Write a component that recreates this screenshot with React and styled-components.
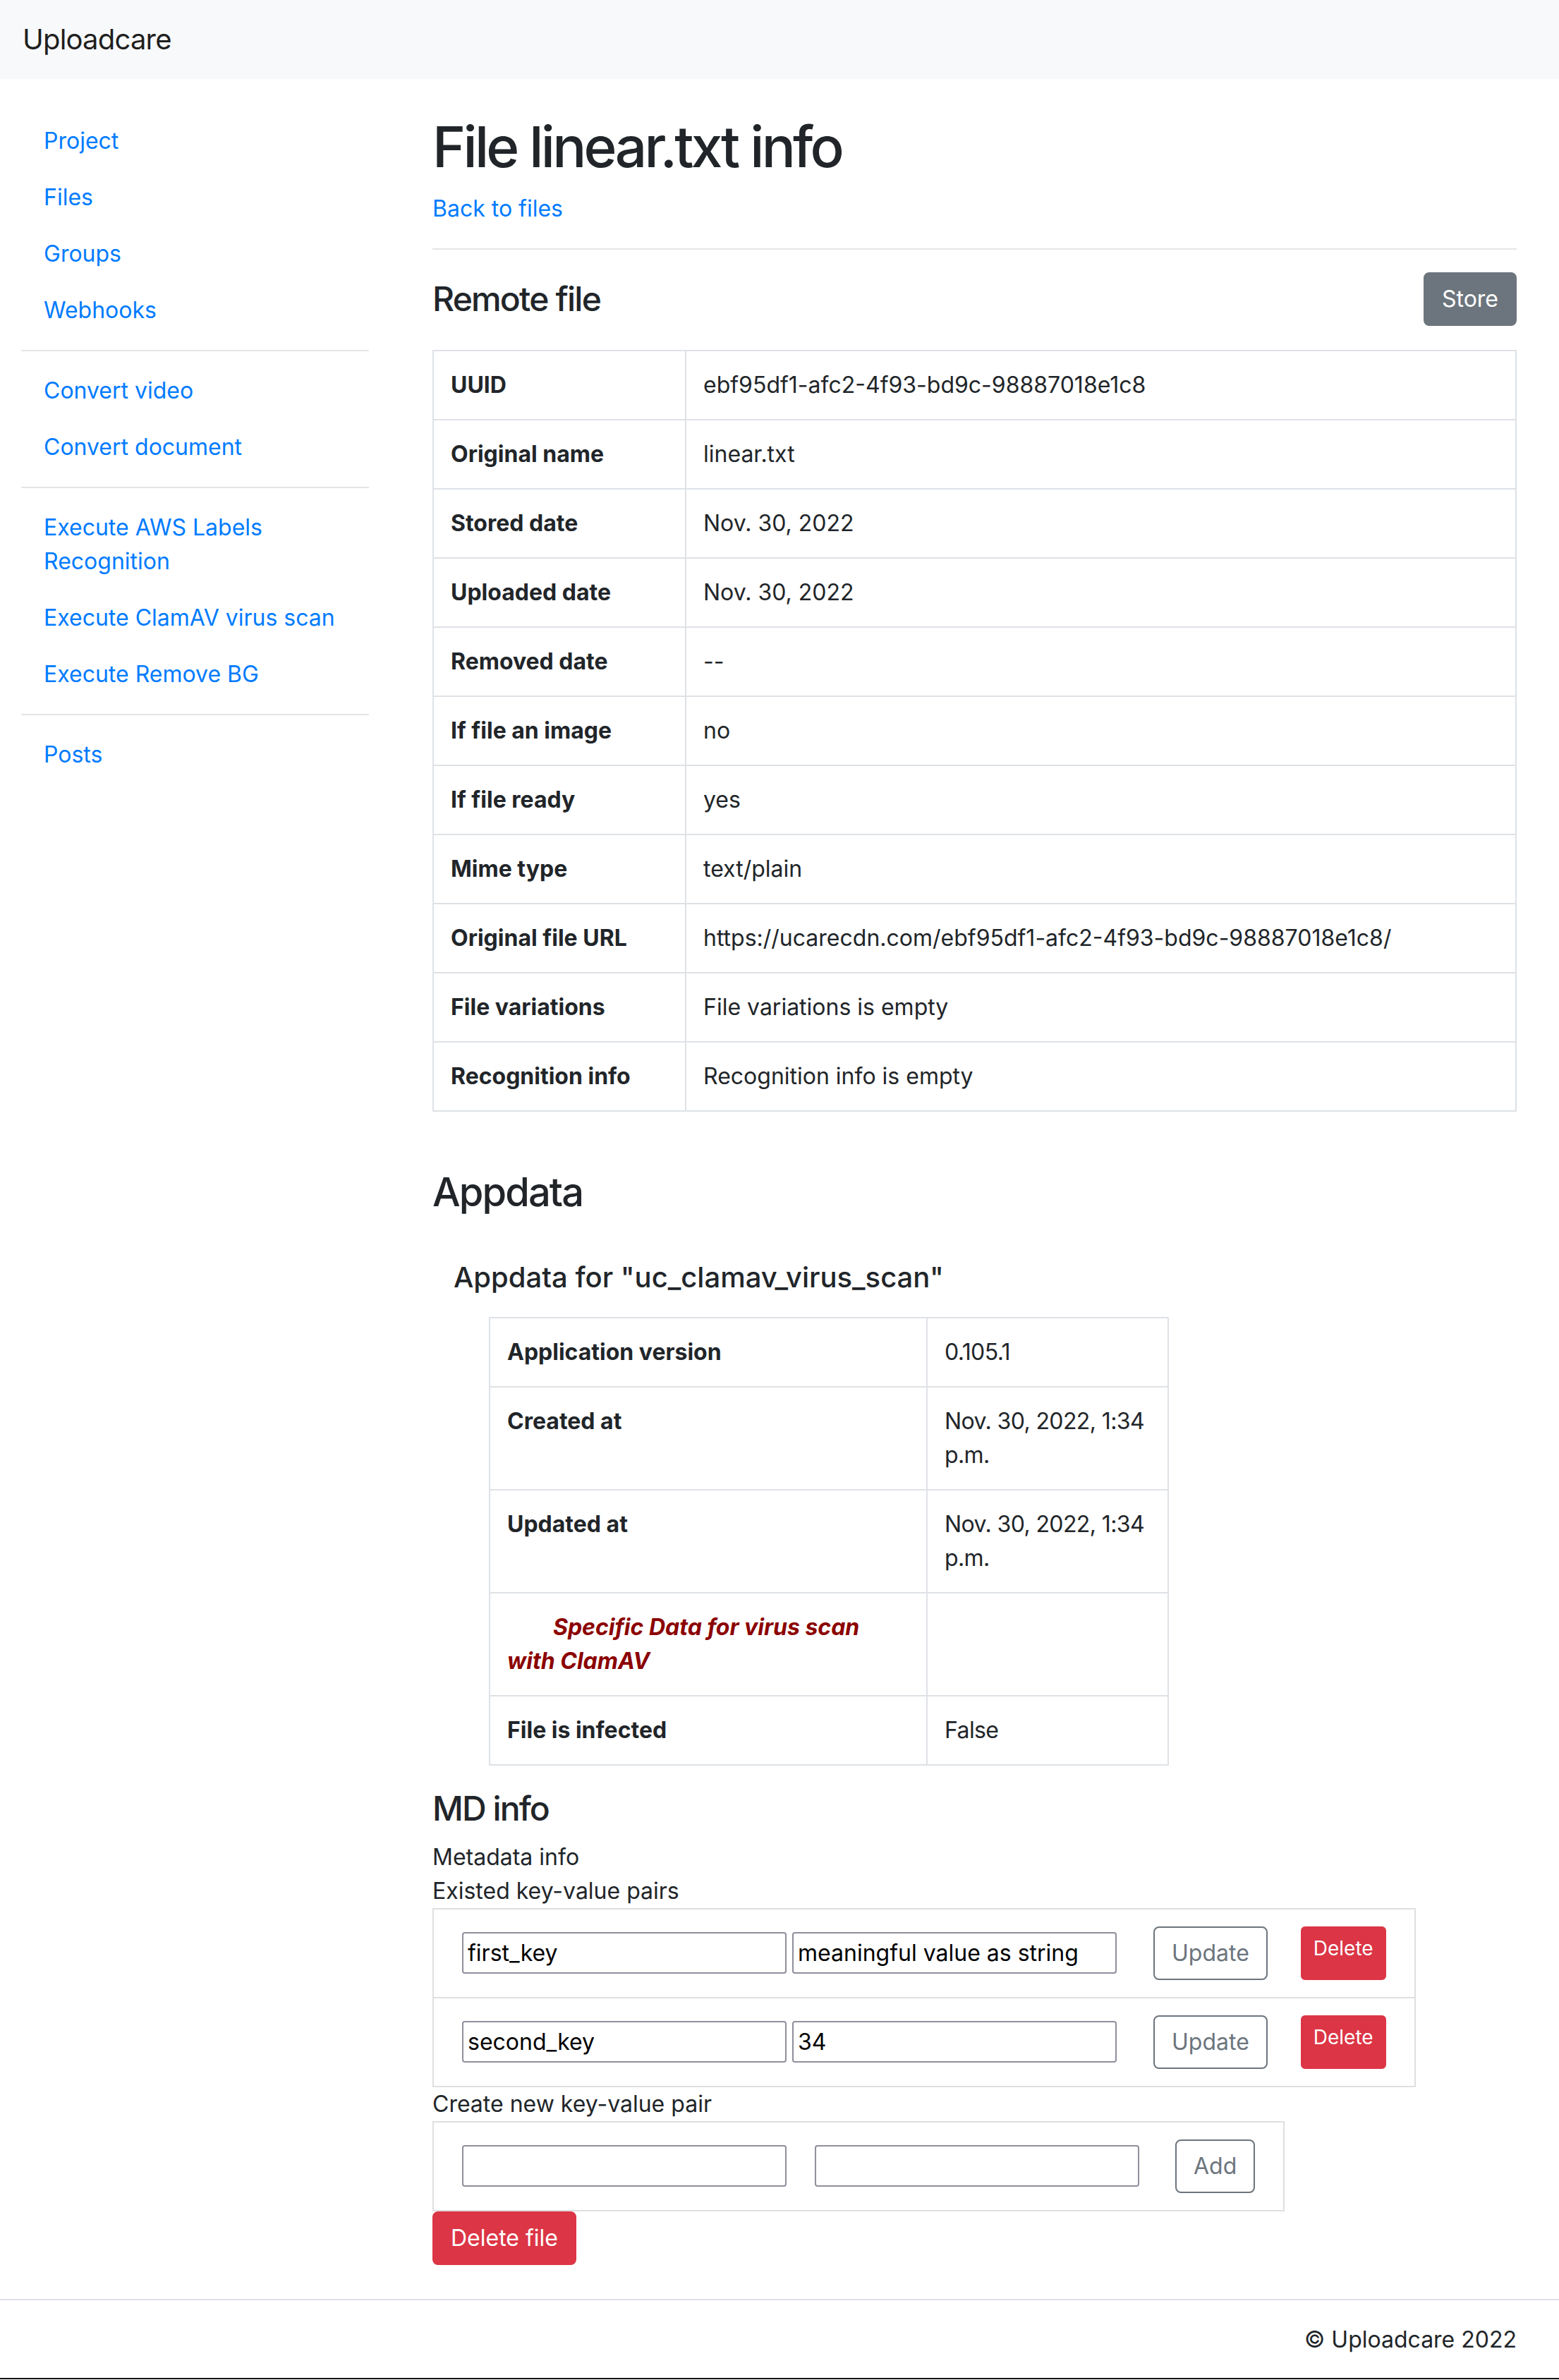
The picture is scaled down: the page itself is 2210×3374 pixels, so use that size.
import React from "react";
import styled, { createGlobalStyle } from "styled-components";

const GlobalStyle = createGlobalStyle`
  * { box-sizing: border-box; }
  body {
    margin: 0;
    font-family: Inter, "Noto Sans", "Liberation Sans", sans-serif;
    font-size: 32px;
    line-height: 48px;
    color: #212529;
    background: #fff;
  }
`;

const Navbar = styled.header`
  height: 112px;
  background-color: #f8f9fa;
  padding: 0 32px;
  display: flex;
  align-items: center;
`;

const Brand = styled.span`
  font-size: 40px;
  line-height: 60px;
  letter-spacing: -0.8px;
  color: rgba(0, 0, 0, 0.9);
`;

const Layout = styled.div`
  display: flex;
  padding: 0 60px 0 30px;
`;

const Sidebar = styled.nav`
  width: 493px;
  flex-shrink: 0;
  padding-top: 48px;
`;

const NavLink = styled.a`
  display: block;
  padding: 16px 32px;
  color: #007bff;
  text-decoration: none;
`;

const Divider = styled.hr`
  margin: ${(p) => (p.$wide ? "32px 0" : "16px 0")};
  border: 0;
  border-top: 2px solid rgba(0, 0, 0, 0.1);
`;

const Main = styled.main`
  flex: 1;
  margin-left: 90px;
  padding: 48px 0 48px;
`;

const Title = styled.h1`
  font-size: 80px;
  line-height: 96px;
  font-weight: 500;
  letter-spacing: -3.7px;
  margin: 0 0 16px;
`;

const TextLink = styled.a`
  display: block;
  color: #007bff;
  text-decoration: none;
`;

const SectionHeader = styled.div`
  display: flex;
  justify-content: space-between;
  align-items: center;
  margin-bottom: 34px;
`;

const Heading = styled.h2`
  font-size: ${(p) => p.$size}px;
  line-height: 1.2;
  font-weight: 500;
  letter-spacing: -1.8px;
  margin: 0;
`;

const Button = styled.button`
  font-family: inherit;
  font-size: 32px;
  line-height: 48px;
  padding: 12px 24px;
  border: 2px solid ${(p) => (p.$variant === "danger" ? "#dc3545" : "#6c757d")};
  border-radius: 8px;
  background: ${(p) =>
    p.$variant === "outline" ? "#fff" : p.$variant === "danger" ? "#dc3545" : "#6c757d"};
  color: ${(p) => (p.$variant === "outline" ? "#6c757d" : "#fff")};
  cursor: pointer;
`;

const SmallDanger = styled.a`
  display: block;
  align-self: stretch;
  padding: 8px 16px;
  font-size: 28px;
  line-height: 42px;
  color: #fff;
  background: #dc3545;
  border: 2px solid #dc3545;
  border-radius: 6px;
  text-decoration: none;
`;

const InfoTable = styled.table`
  width: ${(p) => (p.$width ? `${p.$width}px` : "100%")};
  margin: 0 0 32px ${(p) => p.$indent || 0}px;
  border-collapse: collapse;
  border: 2px solid #dee2e6;

  th,
  td {
    border: 2px solid #dee2e6;
    padding: 24px;
    vertical-align: top;
    text-align: left;
  }

  td {
    letter-spacing: ${(p) => (p.$tight ? "-0.6px" : "normal")};
  }

  th {
    font-weight: 700;
    width: ${(p) => p.$labelWidth}px;
  }
`;

const SpecialNote = styled.span`
  display: block;
  text-indent: 65px;
  color: #8b0000;
  font-style: italic;
  font-weight: 700;
`;

const AppdataTitle = styled.h3`
  font-size: 56px;
  line-height: 67px;
  font-weight: 500;
  letter-spacing: -1.9px;
  margin: 81px 0 63px;
`;

const AppdataSub = styled.h5`
  font-size: 40px;
  line-height: 48px;
  font-weight: 500;
  margin: 0 0 32px 30px;
`;

const MdTitle = styled.h4`
  font-size: 48px;
  line-height: 1.2;
  font-weight: 500;
  letter-spacing: -1.9px;
  margin: 0 0 16px;
`;

const Line = styled.div`
  line-height: 48px;
`;

const PairBox = styled.form`
  display: flex;
  width: fit-content;
  align-items: center;
  padding: 24px 40px;
  border: 2px solid #dfdfdf;
  margin-top: ${(p) => (p.$stacked ? "-2px" : "0")};
`;

const Field = styled.input`
  width: 460px;
  height: 59px;
  padding: 0 6px;
  font-family: inherit;
  font-size: 32px;
  color: #000;
  border: 2px solid #8f8f9d;
  border-radius: 4px;
  margin-right: ${(p) => p.$gap || 0}px;
  background: #fff;
`;

const Spacer = styled.span`
  width: ${(p) => p.$w}px;
  flex-shrink: 0;
`;

const Footer = styled.footer`
  border-top: 2px solid #dee2e6;
  border-bottom: 2px solid #111;
  padding: 32px 60px 30px;
  text-align: right;
`;

const remoteRows = [
  ["UUID", "ebf95df1-afc2-4f93-bd9c-98887018e1c8"],
  ["Original name", "linear.txt"],
  ["Stored date", "Nov. 30, 2022"],
  ["Uploaded date", "Nov. 30, 2022"],
  ["Removed date", "--"],
  ["If file an image", "no"],
  ["If file ready", "yes"],
  ["Mime type", "text/plain"],
  ["Original file URL", "https://ucarecdn.com/ebf95df1-afc2-4f93-bd9c-98887018e1c8/"],
  ["File variations", "File variations is empty"],
  ["Recognition info", "Recognition info is empty"],
];

const pairs = [
  { key: "first_key", value: "meaningful value as string" },
  { key: "second_key", value: "34" },
];

function SideMenu() {
  return (
    <Sidebar>
      <NavLink href="#">Project</NavLink>
      <NavLink href="#">Files</NavLink>
      <NavLink href="#">Groups</NavLink>
      <NavLink href="#">Webhooks</NavLink>
      <Divider />
      <NavLink href="#">Convert video</NavLink>
      <NavLink href="#">Convert document</NavLink>
      <Divider />
      <NavLink href="#">Execute AWS Labels Recognition</NavLink>
      <NavLink href="#">Execute ClamAV virus scan</NavLink>
      <NavLink href="#">Execute Remove BG</NavLink>
      <Divider />
      <NavLink href="#">Posts</NavLink>
    </Sidebar>
  );
}

export default function App() {
  return (
    <>
      <GlobalStyle />
      <Navbar>
        <Brand>Uploadcare</Brand>
      </Navbar>
      <Layout>
        <SideMenu />
        <Main>
          <Title>File linear.txt info</Title>
          <TextLink href="#">Back to files</TextLink>
          <Divider $wide />

          <SectionHeader>
            <Heading $size={48}>Remote file</Heading>
            <Button>Store</Button>
          </SectionHeader>
          <InfoTable $labelWidth={358}>
            <tbody>
              {remoteRows.map(([label, value]) => (
                <tr key={label}>
                  <th>{label}</th>
                  <td>{value}</td>
                </tr>
              ))}
            </tbody>
          </InfoTable>

          <AppdataTitle>Appdata</AppdataTitle>
          <AppdataSub>Appdata for "uc_clamav_virus_scan"</AppdataSub>
          <InfoTable $width={964} $indent={80} $labelWidth={620} $tight>
            <tbody>
              <tr>
                <th>Application version</th>
                <td>0.105.1</td>
              </tr>
              <tr>
                <th>Created at</th>
                <td>Nov. 30, 2022, 1:34 p.m.</td>
              </tr>
              <tr>
                <th>Updated at</th>
                <td>Nov. 30, 2022, 1:34 p.m.</td>
              </tr>
              <tr>
                <th>
                  <SpecialNote>Specific Data for virus scan with ClamAV</SpecialNote>
                </th>
                <td></td>
              </tr>
              <tr>
                <th>File is infected</th>
                <td>False</td>
              </tr>
            </tbody>
          </InfoTable>

          <MdTitle>MD info</MdTitle>
          <Line>Metadata info</Line>
          <Line>Existed key-value pairs</Line>
          {pairs.map((pair, i) => (
            <PairBox key={pair.key} $stacked={i > 0}>
              <Field defaultValue={pair.key} $gap={8} />
              <Field defaultValue={pair.value} />
              <Spacer $w={52} />
              <Button type="button" $variant="outline">
                Update
              </Button>
              <Spacer $w={47} />
              <SmallDanger href="#">Delete</SmallDanger>
            </PairBox>
          ))}
          <Line>Create new key-value pair</Line>
          <PairBox>
            <Field $gap={40} />
            <Field />
            <Spacer $w={51} />
            <Button type="button" $variant="outline">
              Add
            </Button>
          </PairBox>
          <Button type="button" $variant="danger">
            Delete file
          </Button>
        </Main>
      </Layout>
      <Footer>© Uploadcare 2022</Footer>
    </>
  );
}
